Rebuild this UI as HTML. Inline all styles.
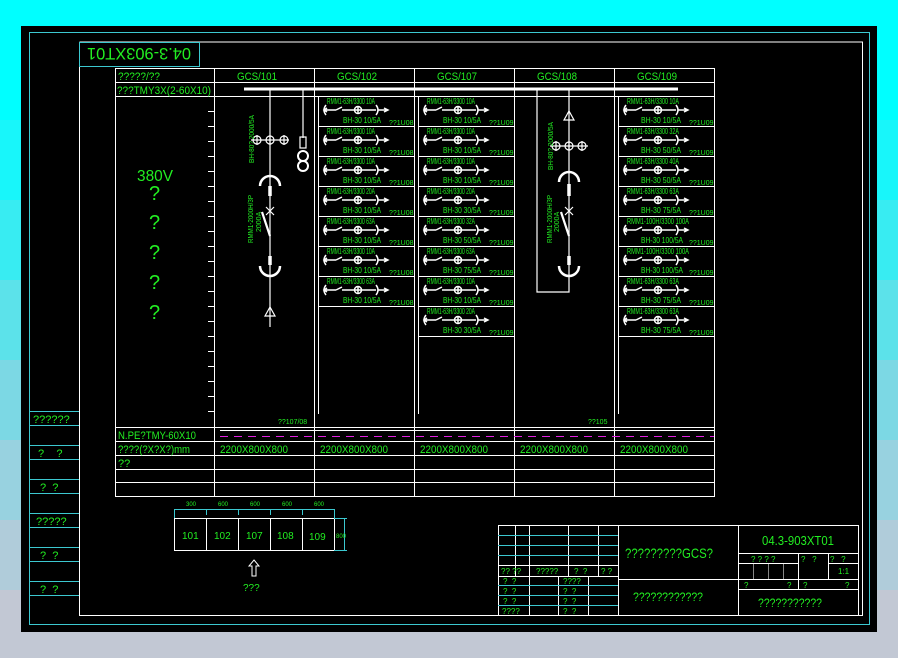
<!DOCTYPE html>
<html><head><meta charset="utf-8"><style>
html,body{margin:0;padding:0;width:898px;height:658px;overflow:hidden;background:#00ffff;}
svg{position:absolute;left:0;top:0;}
text{font-family:"Liberation Sans","Noto Sans CJK SC",sans-serif;fill:#22ee22;}
</style></head><body>
<svg width="898" height="658" viewBox="0 0 898 658">
<defs>
<g id="f" stroke="#fff" fill="none" stroke-width="1.5">
<path d="M8 9 Q4 14 8 19"/><path d="M6 14 H12 M9 12 L6 14 L9 16"/><path d="M12 14 H18 M18 14 L24 11 M24 14 H36"/><circle cx="40" cy="14" r="3.5"/><path d="M36.5 14 H43.5 M40 10 V18"/><path d="M44 14 H58"/><path d="M58 9 Q62 14 58 19"/><path d="M60 14 H70 M66 12 L70 14 L66 16"/>
</g>
</defs>
<rect x="0" y="0" width="898" height="120" fill="#00ffff"/>
<rect x="0" y="120" width="898" height="80" fill="#18f6fa"/>
<rect x="0" y="200" width="898" height="80" fill="#38ecf2"/>
<rect x="0" y="280" width="898" height="80" fill="#5ce2ea"/>
<rect x="0" y="360" width="898" height="80" fill="#7cd8e4"/>
<rect x="0" y="440" width="898" height="80" fill="#98d2e0"/>
<rect x="0" y="520" width="898" height="70" fill="#b0ccda"/>
<rect x="0" y="590" width="898" height="68" fill="#c2c8d4"/>
<rect x="21" y="26" width="856" height="606" fill="#000"/>
<rect x="29.5" y="32.5" width="840" height="592" fill="none" stroke="#3cc8d0"/>
<g stroke="#fff" fill="none" stroke-width="1">
<path d="M79.5 42 V615.5 H862.5 V42 H79.5"/>
</g>
<rect x="79.5" y="42.5" width="120" height="24" fill="none" stroke="#3cc8d0"/>
<text x="139" y="54" font-size="17" text-anchor="middle" transform="rotate(180 139 54)" dy="6" textLength="104" lengthAdjust="spacingAndGlyphs">04.3-903XT01</text>
<g stroke="#3cc8d0">
<line x1="29" y1="411.5" x2="79" y2="411.5"/><line x1="29" y1="425.5" x2="79" y2="425.5"/>
<line x1="29" y1="445.5" x2="79" y2="445.5"/><line x1="29" y1="459.5" x2="79" y2="459.5"/>
<line x1="29" y1="479.5" x2="79" y2="479.5"/><line x1="29" y1="493.5" x2="79" y2="493.5"/>
<line x1="29" y1="513.5" x2="79" y2="513.5"/><line x1="29" y1="527.5" x2="79" y2="527.5"/>
<line x1="29" y1="547.5" x2="79" y2="547.5"/><line x1="29" y1="561.5" x2="79" y2="561.5"/>
<line x1="29" y1="581.5" x2="79" y2="581.5"/><line x1="29" y1="595.5" x2="79" y2="595.5"/>
</g>
<g font-size="11">
<text x="33" y="423">??????</text><text x="38" y="457">?&#160;&#160;&#160;&#160;?</text><text x="40" y="491">?&#160;&#160;?</text>
<text x="36" y="525">?????</text><text x="40" y="559">?&#160;&#160;?</text><text x="40" y="593">?&#160;&#160;?</text>
</g>
<g stroke="#fff" fill="none" stroke-width="1">
<rect x="115.5" y="68.5" width="599" height="428"/>
<line x1="115" y1="82.5" x2="714" y2="82.5"/><line x1="115" y1="96.5" x2="714" y2="96.5"/>
<line x1="115" y1="427.5" x2="714" y2="427.5"/><line x1="115" y1="441.5" x2="714" y2="441.5"/>
<line x1="115" y1="455.5" x2="714" y2="455.5"/><line x1="115" y1="469.5" x2="714" y2="469.5"/>
<line x1="115" y1="482.5" x2="714" y2="482.5"/>
<line x1="214.5" y1="68" x2="214.5" y2="496"/><line x1="314.5" y1="68" x2="314.5" y2="496"/>
<line x1="414.5" y1="68" x2="414.5" y2="496"/><line x1="514.5" y1="68" x2="514.5" y2="496"/>
<line x1="614.5" y1="68" x2="614.5" y2="496"/>
<line x1="318.5" y1="96" x2="318.5" y2="414"/><line x1="418.5" y1="96" x2="418.5" y2="414"/><line x1="618.5" y1="96" x2="618.5" y2="414"/>
<line x1="220" y1="430.5" x2="714" y2="430.5"/>
<path d="M208 111.5h6M208 126.5h6M208 141.5h6M208 156.5h6M208 171.5h6M208 186.5h6M208 201.5h6M208 216.5h6M208 231.5h6M208 246.5h6M208 261.5h6M208 276.5h6M208 291.5h6M208 306.5h6M208 321.5h6M208 336.5h6M208 351.5h6M208 366.5h6M208 381.5h6M208 396.5h6M208 411.5h6"/>
</g>
<line x1="220" y1="436.5" x2="714" y2="436.5" stroke="#e020e0" stroke-dasharray="8,6"/>
<line x1="244" y1="89" x2="678" y2="89" stroke="#fff" stroke-width="3"/>
<g font-size="11">
<text x="118" y="80" textLength="42" lengthAdjust="spacingAndGlyphs">?????/??</text>
<text x="117" y="94" textLength="94" lengthAdjust="spacingAndGlyphs">???TMY3X(2-60X10)</text>
<text x="237" y="80" textLength="40" lengthAdjust="spacingAndGlyphs">GCS/101</text>
<text x="337" y="80" textLength="40" lengthAdjust="spacingAndGlyphs">GCS/102</text>
<text x="437" y="80" textLength="40" lengthAdjust="spacingAndGlyphs">GCS/107</text>
<text x="537" y="80" textLength="40" lengthAdjust="spacingAndGlyphs">GCS/108</text>
<text x="637" y="80" textLength="40" lengthAdjust="spacingAndGlyphs">GCS/109</text>
<text x="118" y="439" textLength="78" lengthAdjust="spacingAndGlyphs">N.PE?TMY-60X10</text>
<text x="118" y="453" textLength="72" lengthAdjust="spacingAndGlyphs">????(?X?X?)mm</text>
<text x="118" y="467">??</text>
<text x="220" y="453" textLength="68" lengthAdjust="spacingAndGlyphs">2200X800X800</text>
<text x="320" y="453" textLength="68" lengthAdjust="spacingAndGlyphs">2200X800X800</text>
<text x="420" y="453" textLength="68" lengthAdjust="spacingAndGlyphs">2200X800X800</text>
<text x="520" y="453" textLength="68" lengthAdjust="spacingAndGlyphs">2200X800X800</text>
<text x="620" y="453" textLength="68" lengthAdjust="spacingAndGlyphs">2200X800X800</text>
</g>
<text x="137" y="181" font-size="16" textLength="36" lengthAdjust="spacingAndGlyphs">380V</text>
<g font-size="20"><text x="149" y="200">?</text><text x="149" y="229">?</text><text x="149" y="259">?</text><text x="149" y="289">?</text><text x="149" y="319">?</text></g>
<text x="278" y="424" font-size="7">??107/08</text>
<text x="588" y="424" font-size="7">??105</text>
<g stroke="#fff" fill="none" stroke-width="1.2">
<line x1="270" y1="89" x2="270" y2="327"/>
<circle cx="257" cy="140" r="4"/><circle cx="270" cy="140" r="4"/><circle cx="284" cy="140" r="4"/>
<path d="M251 140h38M257 135v10M270 135v10M284 135v10"/>
<path d="M260 186 A10 10 0 0 1 280 186" stroke-width="2.5"/>
<line x1="270" y1="186" x2="270" y2="196" stroke-width="3.5"/>
<path d="M266 207l8 8M274 207l-8 8"/>
<line x1="262" y1="212" x2="270" y2="236" stroke-width="2.2"/>
<line x1="270" y1="256" x2="270" y2="265" stroke-width="3.5"/>
<path d="M260 266 A10 10 0 0 0 280 266" stroke-width="2.5"/>
<path d="M265 316l5-9 5 9z"/>
<line x1="303" y1="89" x2="303" y2="138"/>
<rect x="300" y="137" width="6" height="11"/>
<circle cx="303" cy="156" r="5" stroke-width="2"/><circle cx="303" cy="166" r="5" stroke-width="2"/>
</g>
<text font-size="7" transform="translate(254 163) rotate(-90)" textLength="48" lengthAdjust="spacingAndGlyphs">BH-80? 2000/5A</text>
<text font-size="7" transform="translate(253 243) rotate(-90)" textLength="48" lengthAdjust="spacingAndGlyphs">RMM1-2000H/3P</text>
<text font-size="7" transform="translate(261 232) rotate(-90)">2000A</text>
<g stroke="#fff" fill="none" stroke-width="1.2">
<path d="M537 89V292H569V89"/>
<path d="M564 120l5-9 5 9z"/>
<circle cx="556" cy="146" r="4"/><circle cx="569" cy="146" r="4"/><circle cx="582" cy="146" r="4"/>
<path d="M550 146h38M556 141v10M569 141v10M582 141v10"/>
<path d="M559 182 A10 10 0 0 1 579 182" stroke-width="2.5"/>
<line x1="569" y1="184" x2="569" y2="196" stroke-width="3.5"/>
<path d="M565 207l8 8M573 207l-8 8"/>
<line x1="561" y1="212" x2="569" y2="236" stroke-width="2.2"/>
<line x1="569" y1="256" x2="569" y2="265" stroke-width="3.5"/>
<path d="M559 266 A10 10 0 0 0 579 266" stroke-width="2.5"/>
</g>
<text font-size="7" transform="translate(553 170) rotate(-90)" textLength="48" lengthAdjust="spacingAndGlyphs">BH-80? 2000/5A</text>
<text font-size="7" transform="translate(552 243) rotate(-90)" textLength="48" lengthAdjust="spacingAndGlyphs">RMM1-2000H/3P</text>
<text font-size="7" transform="translate(559 232) rotate(-90)">2000A</text>
<g stroke="#fff" stroke-width="1">
<path d="M318 126.5h96M318 156.5h96M318 186.5h96M318 216.5h96M318 246.5h96M318 276.5h96M318 306.5h96"/>
<path d="M418 126.5h96M418 156.5h96M418 186.5h96M418 216.5h96M418 246.5h96M418 276.5h96M418 306.5h96M418 336.5h96"/>
<path d="M618 126.5h96M618 156.5h96M618 186.5h96M618 216.5h96M618 246.5h96M618 276.5h96M618 306.5h96M618 336.5h96"/>
</g>
<use href="#f" x="318" y="96"/><use href="#f" x="318" y="126"/><use href="#f" x="318" y="156"/><use href="#f" x="318" y="186"/><use href="#f" x="318" y="216"/><use href="#f" x="318" y="246"/><use href="#f" x="318" y="276"/>
<use href="#f" x="418" y="96"/><use href="#f" x="418" y="126"/><use href="#f" x="418" y="156"/><use href="#f" x="418" y="186"/><use href="#f" x="418" y="216"/><use href="#f" x="418" y="246"/><use href="#f" x="418" y="276"/><use href="#f" x="418" y="306"/>
<use href="#f" x="618" y="96"/><use href="#f" x="618" y="126"/><use href="#f" x="618" y="156"/><use href="#f" x="618" y="186"/><use href="#f" x="618" y="216"/><use href="#f" x="618" y="246"/><use href="#f" x="618" y="276"/><use href="#f" x="618" y="306"/>
<g font-size="8">
<text x="327" y="104" textLength="48" lengthAdjust="spacingAndGlyphs">RMM1-63H/3300 10A</text><text x="343" y="123" textLength="38" lengthAdjust="spacingAndGlyphs">BH-30 10/5A</text><text x="389" y="125" font-size="7">??1U08</text>
<text x="327" y="134" textLength="48" lengthAdjust="spacingAndGlyphs">RMM1-63H/3300 10A</text><text x="343" y="153" textLength="38" lengthAdjust="spacingAndGlyphs">BH-30 10/5A</text><text x="389" y="155" font-size="7">??1U08</text>
<text x="327" y="164" textLength="48" lengthAdjust="spacingAndGlyphs">RMM1-63H/3300 10A</text><text x="343" y="183" textLength="38" lengthAdjust="spacingAndGlyphs">BH-30 10/5A</text><text x="389" y="185" font-size="7">??1U08</text>
<text x="327" y="194" textLength="48" lengthAdjust="spacingAndGlyphs">RMM1-63H/3300 20A</text><text x="343" y="213" textLength="38" lengthAdjust="spacingAndGlyphs">BH-30 10/5A</text><text x="389" y="215" font-size="7">??1U08</text>
<text x="327" y="224" textLength="48" lengthAdjust="spacingAndGlyphs">RMM1-63H/3300 63A</text><text x="343" y="243" textLength="38" lengthAdjust="spacingAndGlyphs">BH-30 10/5A</text><text x="389" y="245" font-size="7">??1U08</text>
<text x="327" y="254" textLength="48" lengthAdjust="spacingAndGlyphs">RMM1-63H/3300 10A</text><text x="343" y="273" textLength="38" lengthAdjust="spacingAndGlyphs">BH-30 10/5A</text><text x="389" y="275" font-size="7">??1U08</text>
<text x="327" y="284" textLength="48" lengthAdjust="spacingAndGlyphs">RMM1-63H/3300 63A</text><text x="343" y="303" textLength="38" lengthAdjust="spacingAndGlyphs">BH-30 10/5A</text><text x="389" y="305" font-size="7">??1U08</text>

<text x="427" y="104" textLength="48" lengthAdjust="spacingAndGlyphs">RMM1-63H/3300 10A</text><text x="443" y="123" textLength="38" lengthAdjust="spacingAndGlyphs">BH-30 10/5A</text><text x="489" y="125" font-size="7">??1U09</text>
<text x="427" y="134" textLength="48" lengthAdjust="spacingAndGlyphs">RMM1-63H/3300 10A</text><text x="443" y="153" textLength="38" lengthAdjust="spacingAndGlyphs">BH-30 10/5A</text><text x="489" y="155" font-size="7">??1U09</text>
<text x="427" y="164" textLength="48" lengthAdjust="spacingAndGlyphs">RMM1-63H/3300 10A</text><text x="443" y="183" textLength="38" lengthAdjust="spacingAndGlyphs">BH-30 10/5A</text><text x="489" y="185" font-size="7">??1U09</text>
<text x="427" y="194" textLength="48" lengthAdjust="spacingAndGlyphs">RMM1-63H/3300 20A</text><text x="443" y="213" textLength="38" lengthAdjust="spacingAndGlyphs">BH-30 30/5A</text><text x="489" y="215" font-size="7">??1U09</text>
<text x="427" y="224" textLength="48" lengthAdjust="spacingAndGlyphs">RMM1-63H/3300 32A</text><text x="443" y="243" textLength="38" lengthAdjust="spacingAndGlyphs">BH-30 50/5A</text><text x="489" y="245" font-size="7">??1U09</text>
<text x="427" y="254" textLength="48" lengthAdjust="spacingAndGlyphs">RMM1-63H/3300 63A</text><text x="443" y="273" textLength="38" lengthAdjust="spacingAndGlyphs">BH-30 75/5A</text><text x="489" y="275" font-size="7">??1U09</text>
<text x="427" y="284" textLength="48" lengthAdjust="spacingAndGlyphs">RMM1-63H/3300 10A</text><text x="443" y="303" textLength="38" lengthAdjust="spacingAndGlyphs">BH-30 10/5A</text><text x="489" y="305" font-size="7">??1U09</text>
<text x="427" y="314" textLength="48" lengthAdjust="spacingAndGlyphs">RMM1-63H/3300 20A</text><text x="443" y="333" textLength="38" lengthAdjust="spacingAndGlyphs">BH-30 30/5A</text><text x="489" y="335" font-size="7">??1U09</text>

<text x="627" y="104" textLength="52" lengthAdjust="spacingAndGlyphs">RMM1-63H/3300 10A</text><text x="641" y="123" textLength="40" lengthAdjust="spacingAndGlyphs">BH-30 10/5A</text><text x="689" y="125" font-size="7">??1U09</text>
<text x="627" y="134" textLength="52" lengthAdjust="spacingAndGlyphs">RMM1-63H/3300 32A</text><text x="641" y="153" textLength="40" lengthAdjust="spacingAndGlyphs">BH-30 50/5A</text><text x="689" y="155" font-size="7">??1U09</text>
<text x="627" y="164" textLength="52" lengthAdjust="spacingAndGlyphs">RMM1-63H/3300 40A</text><text x="641" y="183" textLength="40" lengthAdjust="spacingAndGlyphs">BH-30 50/5A</text><text x="689" y="185" font-size="7">??1U09</text>
<text x="627" y="194" textLength="52" lengthAdjust="spacingAndGlyphs">RMM1-63H/3300 63A</text><text x="641" y="213" textLength="40" lengthAdjust="spacingAndGlyphs">BH-30 75/5A</text><text x="689" y="215" font-size="7">??1U09</text>
<text x="627" y="224" textLength="62" lengthAdjust="spacingAndGlyphs">RMM1-100H/3300 100A</text><text x="641" y="243" textLength="42" lengthAdjust="spacingAndGlyphs">BH-30 100/5A</text><text x="689" y="245" font-size="7">??1U09</text>
<text x="627" y="254" textLength="62" lengthAdjust="spacingAndGlyphs">RMM1-100H/3300 100A</text><text x="641" y="273" textLength="42" lengthAdjust="spacingAndGlyphs">BH-30 100/5A</text><text x="689" y="275" font-size="7">??1U09</text>
<text x="627" y="284" textLength="52" lengthAdjust="spacingAndGlyphs">RMM1-63H/3300 63A</text><text x="641" y="303" textLength="40" lengthAdjust="spacingAndGlyphs">BH-30 75/5A</text><text x="689" y="305" font-size="7">??1U09</text>
<text x="627" y="314" textLength="52" lengthAdjust="spacingAndGlyphs">RMM1-63H/3300 63A</text><text x="641" y="333" textLength="40" lengthAdjust="spacingAndGlyphs">BH-30 75/5A</text><text x="689" y="335" font-size="7">??1U09</text>
</g>
<g stroke="#fff" fill="none">
<rect x="174.5" y="518.5" width="160" height="32"/>
<path d="M206.5 518v32M238.5 518v32M270.5 518v32M302.5 518v32"/>
<path d="M254 560l5 6h-3v10h-4v-10h-3z"/>
</g>
<g stroke="#3cc8d0" fill="none">
<path d="M174.5 509v9M174 509.5h160M206.5 509v6M238.5 509v6M270.5 509v6M302.5 509v6M334.5 509v9M334 518.5h13M334 550.5h13M344.5 518v32"/>
</g>
<g font-size="6"><text x="186" y="506">300</text><text x="218" y="506">600</text><text x="250" y="506">600</text><text x="282" y="506">600</text><text x="314" y="506">600</text><text x="336" y="538">800</text></g>
<g font-size="10"><text x="182" y="539">101</text><text x="214" y="539">102</text><text x="246" y="539">107</text><text x="277" y="539">108</text><text x="309" y="540">109</text><text x="243" y="591">???</text></g>
<g stroke="#fff" fill="none">
<rect x="498.5" y="525.5" width="360" height="90"/>
<path d="M618.5 525v90M738.5 525v90M515.5 525v51M529.5 525v90M568.5 525v51M598.5 525v51M558.5 576v39M588.5 576v39"/>
<path d="M498 565.5h120M498 576.5h120M618 579.5h120M738 553.5h120M738 563.5h60M828 563.5h30M738 579.5h120M738 589.5h120M798.5 553v36M828.5 553v26"/>
</g>
<g stroke="#3cc8d0"><path d="M498 535.5h120M498 545.5h120M498 555.5h120M498 585.5h120M498 595.5h120M498 605.5h120"/></g>
<g stroke="#888"><path d="M753.5 564v15M768.5 564v15M783.5 564v15"/></g>
<g font-size="8"><text x="501" y="574">?? ??</text><text x="536" y="574">?????</text><text x="574" y="574">?&#160;&#160;?</text><text x="601" y="574">? ?</text>
<text x="503" y="584">?&#160;&#160;?</text><text x="503" y="594">?&#160;&#160;?</text><text x="503" y="604">?&#160;&#160;?</text><text x="502" y="614">????</text>
<text x="563" y="584">????</text><text x="563" y="594">?&#160;&#160;?</text><text x="563" y="604">?&#160;&#160;?</text><text x="563" y="614">?&#160;&#160;?</text>
<text x="751" y="562">? ? ? ?</text><text x="801" y="562">?&#160;&#160;&#160;?</text><text x="830" y="562">?&#160;&#160;&#160;?</text><text x="838" y="574">1:1</text>
<text x="744" y="588">?</text><text x="787" y="588">?</text><text x="803" y="588">?</text><text x="845" y="588">?</text></g>
<text x="625" y="558" font-size="14" textLength="88" lengthAdjust="spacingAndGlyphs">?????????GCS?</text>
<text x="633" y="601" font-size="12" textLength="70" lengthAdjust="spacingAndGlyphs">????????????</text>
<text x="762" y="545" font-size="13" textLength="72" lengthAdjust="spacingAndGlyphs">04.3-903XT01</text>
<text x="758" y="607" font-size="12" textLength="64" lengthAdjust="spacingAndGlyphs">???????????</text>
</svg>
</body></html>
